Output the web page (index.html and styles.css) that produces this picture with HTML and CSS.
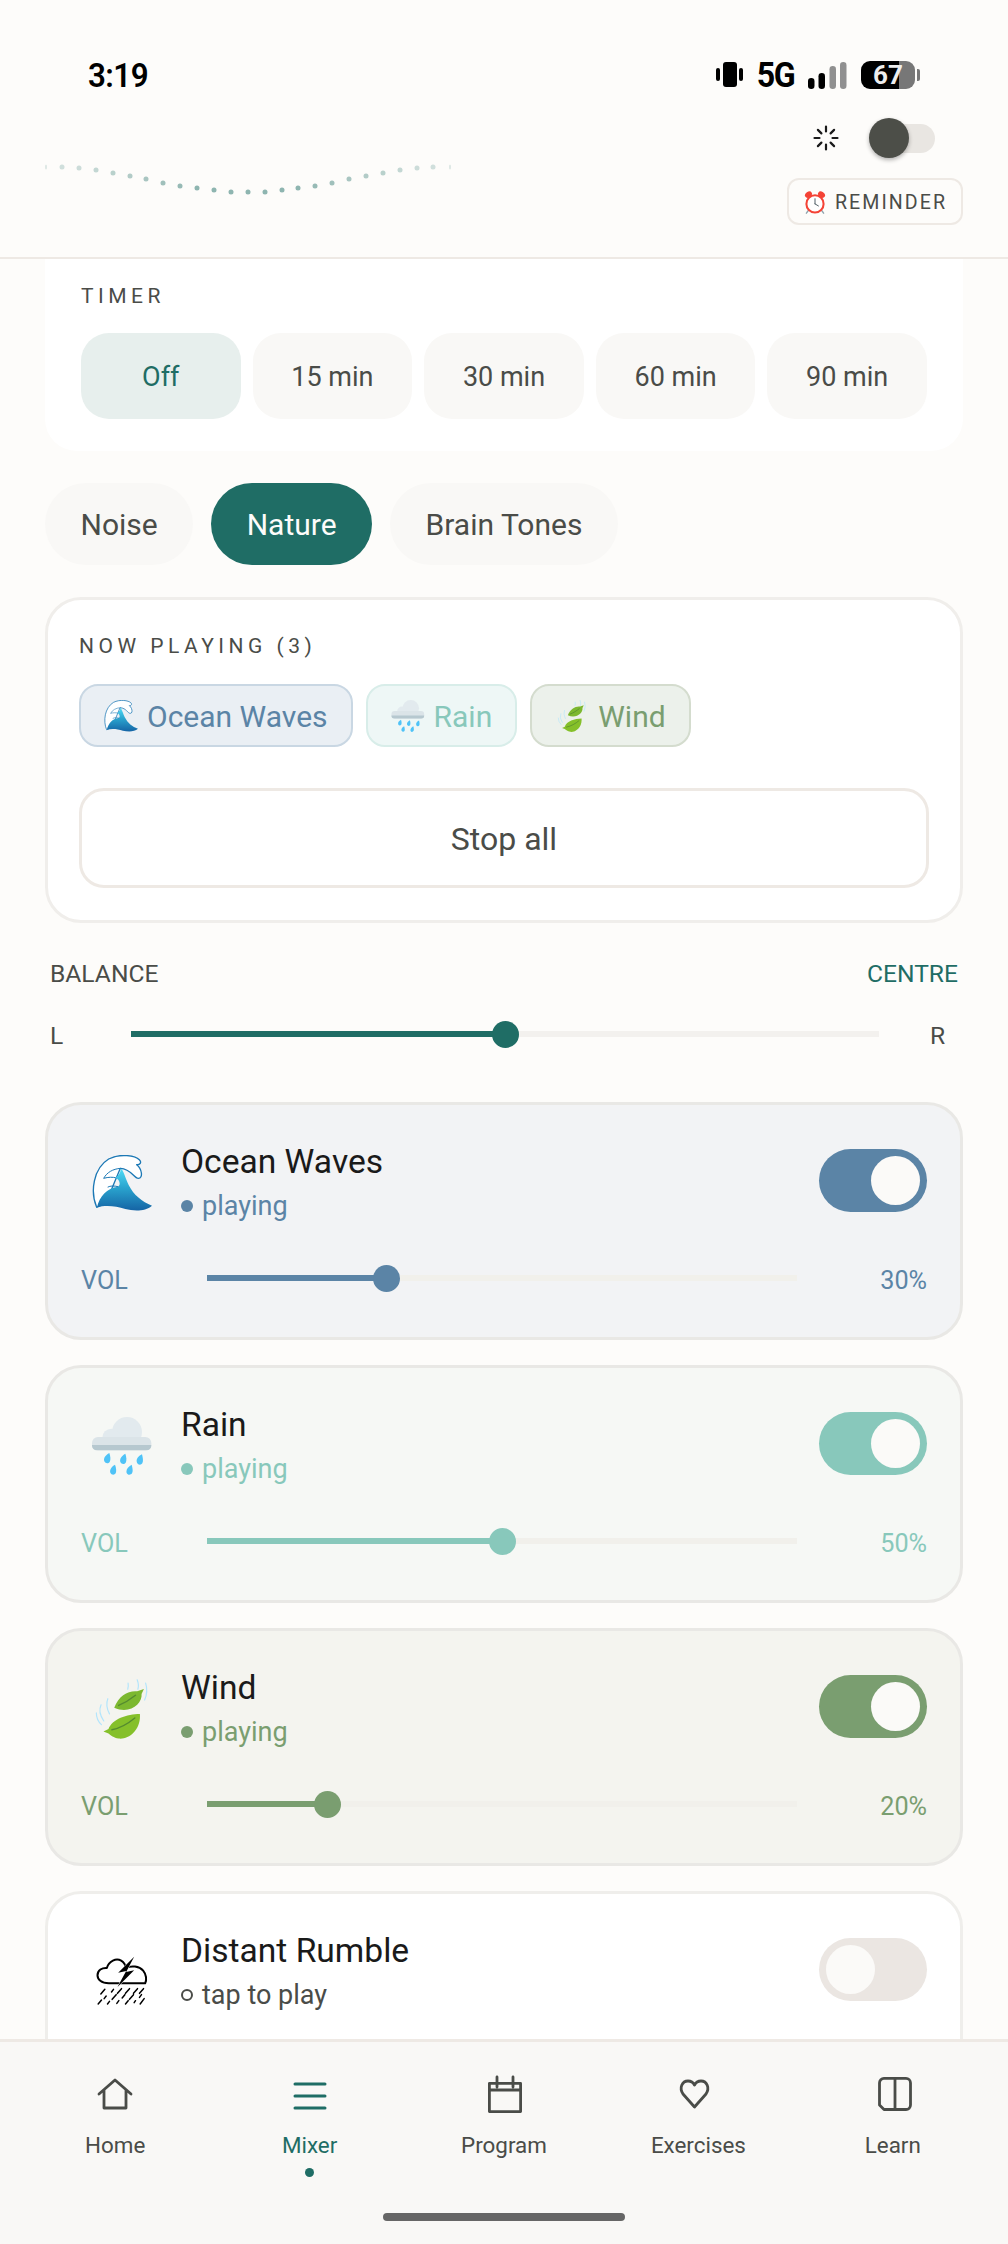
FILE: index.html
```html
<!DOCTYPE html>
<html lang="en">
<head>
<meta charset="utf-8">
<title>Mixer</title>
<link rel="stylesheet" href="styles.css">
</head>
<body>
<svg class="defs" aria-hidden="true">
  <defs>
    <linearGradient id="wave-grad" x1="0" y1="0" x2="0" y2="1">
      <stop offset="0" stop-color="#4fdcf7"/>
      <stop offset=".45" stop-color="#2aa5cf"/>
      <stop offset="1" stop-color="#1564a5"/>
    </linearGradient>
    <symbol id="e-wave" viewBox="0 0 180 168">
      <path d="M14 157C-6 110 4 40 50 12 85-6 130 2 142 14c8 8 2 16-8 15 16 12 20 41 5 41-14 0-20-28-54-30L60 100 30 150Z" fill="#fff" stroke="#1c78b5" stroke-width="4" stroke-linejoin="round"/>
      <path d="M15 157c7-32 30-59 63-62 10-7 4-23-8-27 12-8 18-18 15-28 10 5 15 30 25 50 15 30 40 50 70 62-20 18-55 16-80 10-30-10-60-12-85-5Z" fill="url(#wave-grad)"/>
      <path d="M85 40C62 42 45 52 35 70c14-4 28-4 35-2M78 95C66 92 55 92 48 96" fill="none" stroke="#1c78b5" stroke-width="3" stroke-linecap="round"/>
    </symbol>
    <symbol id="e-rain" viewBox="0 0 180 174">
      <circle cx="105" cy="45" r="45" fill="#e2eaee"/>
      <circle cx="58" cy="62" r="27" fill="#e2eaee"/>
      <rect x="0" y="60" width="178" height="40" rx="18" fill="#dbe4e8"/>
      <path d="M0 84h178v2a14 14 0 0 1-14 14H14A14 14 0 0 1 0 86Z" fill="#b6c8cf"/>
      <g fill="#4fc3f7">
        <path d="M52 108c-11 6-19 15-15 25 3 7 12 8 16 2 4-7 2-18-1-27Z"/>
        <path d="M100 110c-11 6-18 15-15 25 3 7 12 8 16 2 4-7 2-18-1-27Z"/>
        <path d="M150 112c-11 5-19 15-15 25 3 7 12 8 16 2 4-7 1-18-1-27Z"/>
        <path d="M69 143c-11 6-17 15-14 24 3 7 12 8 16 2 3-7 1-18-2-26Z"/>
        <path d="M119 143c-11 6-18 15-15 25 3 7 12 7 16 1 4-7 1-18-1-26Z"/>
      </g>
    </symbol>
    <symbol id="e-wind" viewBox="0 0 160 177">
      <g fill="none" stroke="#b3e5fc" stroke-width="3.5" stroke-linecap="round">
        <path d="M98 12q2 10-1 18M125 2q6 16 2 28M150 12q8 25-3 50M38 58q-8 20 5 45M18 76q-10 22 8 48M4 100q0 20 15 35"/>
      </g>
      <path d="M57 85C70 48 100 33 125 36l20-7-7 15c3 27-33 62-81 41Z" fill="#7cb82f"/>
      <path d="M133 103c4 47-33 77-63 73-15-2-23-10-30-15l-15-6 15-7c10-30 55-45 93-45Z" fill="#85c02a"/>
      <path d="M70 78c20-8 35-18 50-30M50 150c25-5 50-20 68-35" fill="none" stroke="#558b2f" stroke-width="4" stroke-linecap="round"/>
    </symbol>
    <symbol id="e-alarm" viewBox="0 0 64 69">
      <ellipse cx="13" cy="13" rx="11" ry="8" transform="rotate(-35 13 13)" fill="#f44336"/>
      <ellipse cx="51" cy="13" rx="11" ry="8" transform="rotate(35 51 13)" fill="#f44336"/>
      <path d="M12 60l-5 7M52 60l5 7" stroke="#90a4ae" stroke-width="4" stroke-linecap="round"/>
      <circle cx="32" cy="40" r="25" fill="#fff" stroke="#f44336" stroke-width="6"/>
      <path d="M32 25v15M32 40l10 6" stroke="#37474f" stroke-width="2.5" stroke-linecap="round"/>
    </symbol>
    <symbol id="e-storm" viewBox="0 0 155 150">
      <path d="M38 82C15 82 4 70 4 58c0-16 14-23 28-22C38 15 60 5 75 14c8 5 13 13 14 22 16-8 40-6 52 8 10 12 11 28 6 38Z" fill="#fff" stroke="#000" stroke-width="6" stroke-linejoin="round"/>
      <path d="M114 2 66 50l24-5-26 48 50-50-24 5Z" fill="#000" stroke="#fff" stroke-width="3" paint-order="stroke" stroke-linejoin="round"/>
      <g stroke="#000" stroke-width="4.500" stroke-linecap="round">
        <path d="M26 100l-12 14M52 100l-6 8M76 98l-12 14M100 98l-12 14M124 98l-12 14M142 98l-12 14"/>
        <path d="M30 120l-6 8M60 116l-12 14M86 116l-8 10M112 116l-12 14M136 116l-6 8"/>
        <path d="M16 132l-10 12M40 136l-6 8M68 134l-6 8M96 134l-8 10M118 134l-4 6M144 128l-12 16"/>
      </g>
    </symbol>
  </defs>
</svg>

<div class="app">
  <header class="header">
    <div class="status">
      <span class="clock">3:19</span>
      <div class="status-icons">
        <svg class="ic-vibrate" width="27" height="26" viewBox="0 0 27 26"><rect x="7" y="0" width="14" height="25" rx="3"/><rect x="0" y="6" width="4" height="13" rx="2"/><rect x="23" y="6" width="4" height="13" rx="2"/></svg>
        <span class="net">5G</span>
        <svg class="ic-signal" width="39" height="27" viewBox="0 0 39 27"><rect x="0" y="16" width="6.5" height="11" rx="3.2"/><rect x="10.5" y="11" width="6.5" height="16" rx="3.2"/><rect class="dim" x="21.5" y="4" width="6.5" height="23" rx="3.2"/><rect class="dim" x="32" y="0" width="6.5" height="27" rx="3.2"/></svg>
        <div class="battery"><span class="batt-body">67</span><span class="batt-nub"></span></div>
      </div>
    </div>
    <div class="head-row">
      <svg class="wave" width="410" height="90" viewBox="0 0 410 90">
        <g fill="#1f6d65">
          <ellipse cx="1" cy="57" rx="1" ry="2.5" opacity=".15"/>
          <circle cx="17" cy="57" r="2.5" opacity=".2"/>
          <circle cx="34" cy="58" r="2.5" opacity=".22"/>
          <circle cx="51" cy="60" r="2.5" opacity=".26"/>
          <circle cx="68" cy="63" r="2.5" opacity=".3"/>
          <circle cx="85" cy="66" r="2.5" opacity=".34"/>
          <circle cx="101" cy="69" r="2.5" opacity=".38"/>
          <circle cx="118" cy="73" r="2.5" opacity=".42"/>
          <circle cx="135" cy="76" r="2.5" opacity=".46"/>
          <circle cx="152" cy="78" r="2.5" opacity=".5"/>
          <circle cx="169" cy="80" r="2.5" opacity=".5"/>
          <circle cx="186" cy="82" r="2.5" opacity=".5"/>
          <circle cx="203" cy="82" r="2.5" opacity=".5"/>
          <circle cx="220" cy="82" r="2.5" opacity=".5"/>
          <circle cx="237" cy="80" r="2.5" opacity=".5"/>
          <circle cx="253" cy="78" r="2.5" opacity=".5"/>
          <circle cx="270" cy="76" r="2.5" opacity=".46"/>
          <circle cx="287" cy="73" r="2.5" opacity=".42"/>
          <circle cx="304" cy="69" r="2.5" opacity=".38"/>
          <circle cx="321" cy="66" r="2.5" opacity=".34"/>
          <circle cx="338" cy="63" r="2.5" opacity=".3"/>
          <circle cx="355" cy="60" r="2.5" opacity=".26"/>
          <circle cx="372" cy="58" r="2.5" opacity=".22"/>
          <circle cx="388" cy="57" r="2.5" opacity=".2"/>
          <ellipse cx="405" cy="57" rx="1" ry="2.5" opacity=".15"/>
        </g>
      </svg>
      <div class="head-controls">
        <div class="theme-row">
          <svg class="spinner" width="26" height="26" viewBox="0 0 26 26"><g stroke="#1a1a1a" stroke-width="2.2" stroke-linecap="round"><path d="M13 1.500v5M13 19.500v5M1.500 13h5M19.500 13h5M4.900 4.900l3.500 3.500M17.600 17.600l3.500 3.500M4.900 21.100l3.500-3.500M17.600 8.400l3.500-3.500"/></g></svg>
          <div class="mini-toggle"><span class="mini-knob"></span></div>
        </div>
        <button class="reminder"><svg class="alarm" width="22" height="24"><use href="#e-alarm"/></svg><span>REMINDER</span></button>
      </div>
    </div>
  </header>

  <main class="main">
    <section class="timer">
      <div class="eyebrow">TIMER</div>
      <div class="timer-row">
        <button class="t-btn is-on">Off</button>
        <button class="t-btn">15 min</button>
        <button class="t-btn">30 min</button>
        <button class="t-btn">60 min</button>
        <button class="t-btn">90 min</button>
      </div>
    </section>

    <nav class="pills">
      <button class="pill">Noise</button>
      <button class="pill is-on">Nature</button>
      <button class="pill">Brain Tones</button>
    </nav>

    <section class="now">
      <div class="eyebrow">NOW PLAYING (3)</div>
      <div class="chips">
        <span class="chip c-ocean"><svg class="chip-ic" width="34" height="32"><use href="#e-wave"/></svg>Ocean Waves</span>
        <span class="chip c-rain"><svg class="chip-ic" width="34" height="32"><use href="#e-rain"/></svg>Rain</span>
        <span class="chip c-wind"><svg class="chip-ic" width="34" height="32"><use href="#e-wind"/></svg>Wind</span>
      </div>
      <button class="stop">Stop all</button>
    </section>

    <section class="balance">
      <div class="bal-top"><span>BALANCE</span><span class="bal-val">CENTRE</span></div>
      <div class="bal-row">
        <span class="bal-l">L</span>
        <div class="track t-teal"><div class="fill" style="width:50%"><span class="thumb"></span></div></div>
        <span class="bal-r">R</span>
      </div>
    </section>

    <div class="sources">
      <article class="source s-ocean">
        <div class="s-head">
          <div class="s-emoji"><svg width="60" height="56"><use href="#e-wave"/></svg></div>
          <div class="s-text"><div class="s-title">Ocean Waves</div><div class="s-sub"><span class="dot"></span>playing</div></div>
          <div class="toggle is-on"><span class="knob"></span></div>
        </div>
        <div class="s-vol"><span class="vol">VOL</span><div class="track"><div class="fill" style="width:30.5%"><span class="thumb"></span></div></div><span class="pct">30%</span></div>
      </article>

      <article class="source s-rain">
        <div class="s-head">
          <div class="s-emoji"><svg width="60" height="58"><use href="#e-rain"/></svg></div>
          <div class="s-text"><div class="s-title">Rain</div><div class="s-sub"><span class="dot"></span>playing</div></div>
          <div class="toggle is-on"><span class="knob"></span></div>
        </div>
        <div class="s-vol"><span class="vol">VOL</span><div class="track"><div class="fill" style="width:50%"><span class="thumb"></span></div></div><span class="pct">50%</span></div>
      </article>

      <article class="source s-wind">
        <div class="s-head">
          <div class="s-emoji"><svg width="54" height="60"><use href="#e-wind"/></svg></div>
          <div class="s-text"><div class="s-title">Wind</div><div class="s-sub"><span class="dot"></span>playing</div></div>
          <div class="toggle is-on"><span class="knob"></span></div>
        </div>
        <div class="s-vol"><span class="vol">VOL</span><div class="track"><div class="fill" style="width:20.5%"><span class="thumb"></span></div></div><span class="pct">20%</span></div>
      </article>

      <article class="source s-off">
        <div class="s-head">
          <div class="s-emoji s-storm"><svg width="52" height="50"><use href="#e-storm"/></svg></div>
          <div class="s-text"><div class="s-title">Distant Rumble</div><div class="s-sub"><span class="dot"></span>tap to play</div></div>
          <div class="toggle"><span class="knob"></span></div>
        </div>
      </article>
    </div>
  </main>

  <footer class="tabbar">
    <div class="tabs">
      <a class="tab">
        <svg width="40" height="40" viewBox="0 0 40 40"><path d="M4 19 20 5l16 14M9 15v18h22V15"/></svg>
        <span>Home</span>
      </a>
      <a class="tab is-on">
        <svg width="40" height="40" viewBox="0 0 40 40"><path d="M5 9h30M5 21h30M5 33h30"/></svg>
        <span>Mixer</span>
        <i class="tab-dot"></i>
      </a>
      <a class="tab">
        <svg width="40" height="40" viewBox="0 0 40 40"><path d="M5.400 8.400h31.200v28.200H5.400zM5.400 15h31.200M13 2v10M29 2v10"/></svg>
        <span>Program</span>
      </a>
      <a class="tab">
        <svg width="40" height="40" viewBox="0 0 40 40"><path d="M16.500 32 5 19C1 13 4 6 10 6c3 0 5.500 2 6.500 4 1-2 3.500-4 6.500-4 6 0 9 7 5 13Z"/></svg>
        <span>Exercises</span>
      </a>
      <a class="tab">
        <svg width="40" height="40" viewBox="0 0 40 40"><path d="M11 3.400h22a4.500 4.500 0 0 1 4.500 4.500V30a4.500 4.500 0 0 1-4.500 4.500H11L6.500 30V8A4.500 4.500 0 0 1 11 3.400ZM22 3.400v31.200"/></svg>
        <span>Learn</span>
      </a>
    </div>
    <div class="home-bar"></div>
  </footer>
</div>
</body>
</html>
```

FILE: styles.css
```css
* { box-sizing: border-box; }
html, body { margin: 0; padding: 0; }
body { background: #fdfcfa; font-family: Roboto, "Noto Sans", sans-serif; color: #4a4c48; }
button { font-family: inherit; color: inherit; border: 0; padding: 0; }
.defs { display: block; width: 0; height: 0; overflow: hidden; }

.app { height: 2244px; display: flex; flex-direction: column; overflow: hidden; }

/* Header */
.header { height: 259px; flex: none; border-bottom: 2px solid #eee9e4; background: #fdfcfa; }
.status { height: 95px; padding: 55px 88px 0; display: flex; justify-content: space-between; align-items: center; color: #000; }
.clock { font-size: 33px; font-weight: 600; letter-spacing: -.6px; transform: scaleX(.95); transform-origin: left center; }
.status-icons { display: flex; align-items: center; }
.ic-vibrate { margin-right: 12px; }
.net { font-size: 35px; font-weight: 700; letter-spacing: -1.500px; margin-right: 12px; transform: scaleX(.92); }
.ic-signal { margin-right: 14px; }
.ic-signal .dim { fill: #909090; }
.battery { display: flex; align-items: center; }
.batt-body { width: 54px; height: 28px; border-radius: 9px; background: linear-gradient(90deg, #000 70%, #777 70%); color: #eee; font-size: 26px; font-weight: 700; line-height: 28px; text-align: center; }
.batt-nub { width: 3px; height: 12px; margin-left: 2px; background: #777; border-radius: 0 2px 2px 0; }

.head-row { display: flex; justify-content: space-between; align-items: flex-start; padding: 15px 45px 0; }
.head-controls { width: 176px; }
.theme-row { height: 56px; display: flex; align-items: center; justify-content: flex-end; padding-right: 28px; }
.spinner { margin-right: 41px; }
.mini-toggle { width: 55px; height: 29px; border-radius: 15px; background: #e9e6e2; position: relative; }
.mini-knob { position: absolute; left: -11px; top: -5.500px; width: 40px; height: 40px; border-radius: 50%; background: #4c4e48; box-shadow: 0 2px 4px rgba(0,0,0,.3); }
.reminder { margin-top: 12px; width: 176px; height: 47px; background: #fdfcfa; border: 2.500px solid #eee9e4; border-radius: 12px; display: flex; align-items: center; padding: 1px 0 0 15px; gap: 9px; font-size: 19.600px; letter-spacing: 2.050px; white-space: nowrap; }
.alarm { flex: none; }

/* Main */
.main { flex: 1; min-height: 0; overflow: hidden; padding: 0 45px; }
.eyebrow { font-size: 21px; letter-spacing: 4.500px; line-height: 30px; color: #4a4c48; }

.timer { background: #fff; border-radius: 0 0 32px 32px; padding: 22px 36px 32px; }
.timer-row { display: flex; gap: 12px; margin-top: 22px; }
.t-btn { flex: 1 1 0; height: 86px; padding-top: 1px; background: #f9f8f6; border-radius: 28px; font-size: 27px; }
.t-btn.is-on { background: #e7efed; color: #1f6d65; }

.pills { display: flex; gap: 18px; margin-top: 32px; }
.pill { height: 82px; padding: 0 35.500px; border-radius: 41px; background: #f9f8f6; font-size: 30px; }
.pill.is-on { background: #1f6d65; color: #fdfcfa; }

.now { margin-top: 32px; background: #fff; border: 3px solid #f0eeeb; border-radius: 36px; padding: 31px 31px 32px; }
.chips { display: flex; gap: 13px; margin-top: 23px; }
.chip { height: 63px; border: 2.500px solid; border-radius: 19px; padding: 1px 23px 0; display: flex; align-items: center; font-size: 30px; }
.chip-ic { margin-right: 9px; flex: none; margin-top: -1px; }
.c-ocean { background: #eaeff4; border-color: #c9d7e3; color: #5b84a6; }
.c-rain { background: #eef7f6; border-color: #d8ede9; color: #88c8bb; }
.c-wind { background: #ecf1eb; border-color: #d4dcce; color: #7a9e70; }
.stop { display: block; width: 100%; height: 100px; margin-top: 41px; padding-top: 2px; background: #fff; border: 3px solid #eee9e4; border-radius: 25px; font-size: 32px; }

.balance { height: 179px; padding: 33px 5px 0; font-size: 24.600px; }
.bal-top { display: flex; justify-content: space-between; line-height: 36px; }
.bal-val { color: #1f6d65; }
.bal-row { display: flex; align-items: center; margin-top: 24px; height: 36px; }
.bal-l { width: 81px; padding-top: 2px; }
.bal-r { width: 79px; padding: 2px 0 0 51px; }

.track { flex: 1; height: 6px; background: #f3f1ee; position: relative; color: #1f6d65; }
.fill { height: 100%; background: currentColor; position: relative; }
.thumb { position: absolute; right: -13.500px; top: -10.500px; width: 27px; height: 27px; border-radius: 50%; background: currentColor; }

/* Sources */
.sources { display: flex; flex-direction: column; gap: 25px; }
.source { height: 238px; flex: none; border: 3px solid #e9e8e5; border-radius: 36px; padding: 44px 33px 39px; }
.s-ocean { background: #f2f3f5; --c: #5b84a6; }
.s-rain { background: #f6f8f5; --c: #88c8bb; }
.s-wind { background: #f4f4ef; --c: #7a9e70; }
.s-off { background: #fff; border-color: #efeeeb; --c: #e9e4df; }
.s-head { display: flex; align-items: center; height: 63px; }
.s-emoji { width: 82px; flex: none; margin: 5px 18px 0 0; display: flex; justify-content: center; align-items: center; }
.s-storm { margin-top: 22px; }
.s-text { flex: 1; padding-top: 3px; }
.s-title { font-size: 33.600px; line-height: 40px; color: #1a1a1a; }
.s-sub { font-size: 27px; line-height: 34px; margin-top: 7px; color: var(--c); display: flex; align-items: center; }
.s-off .s-sub { color: #4a4c48; }
.dot { width: 12px; height: 12px; border-radius: 50%; background: var(--c); margin-right: 9px; flex: none; }
.s-off .dot { background: none; border: 2px solid #4a4c48; }
.toggle { width: 108px; height: 63px; flex: none; border-radius: 32px; background: #ebe6e2; padding: 7px; display: flex; justify-content: flex-start; }
.toggle.is-on { background: var(--c); justify-content: flex-end; }
.knob { width: 49px; height: 49px; border-radius: 50%; background: #fbfaf8; }
.s-vol { display: flex; align-items: center; height: 40px; margin-top: 46px; color: var(--c); font-size: 25.200px; }
.s-vol .track { color: var(--c); background: #f1f0eb; }
.vol { width: 126px; flex: none; padding-top: 4px; }
.pct { width: 130px; flex: none; text-align: right; padding-top: 4px; }

/* Tab bar */
.tabbar { height: 205px; flex: none; background: #f9f8f6; border-top: 3px solid #eee9e4; padding: 33px 18px 0; position: relative; }
.tabs { display: grid; grid-template-columns: repeat(5, 1fr); }
.tab { display: flex; flex-direction: column; align-items: center; font-size: 22.400px; color: #4a4c48; }
.tab svg { fill: none; stroke: #4a4c48; stroke-width: 2.800px; stroke-linecap: round; stroke-linejoin: round; }
.tab span { line-height: 30px; margin-top: 15px; }
.tab.is-on { color: #1f6d65; }
.tab.is-on svg { stroke: #1f6d65; stroke-width: 3px; }
.tab-dot { width: 9px; height: 9px; border-radius: 50%; background: #1f6d65; margin-top: 8px; }
.home-bar { position: absolute; left: 383px; bottom: 23px; width: 242px; height: 8px; border-radius: 4px; background: #666; }
```
